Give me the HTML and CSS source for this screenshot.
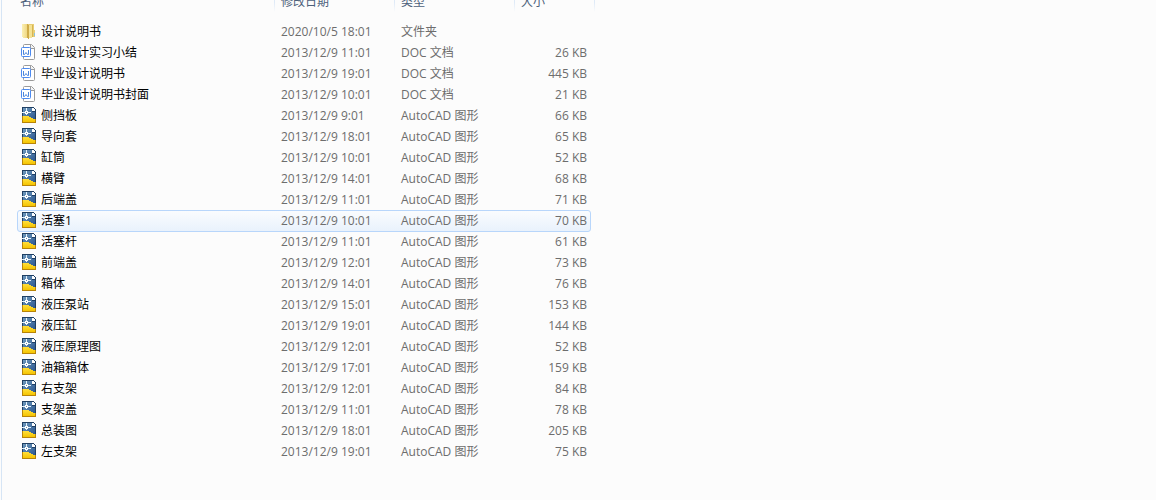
FILE: index.html
```html
<!DOCTYPE html>
<html lang="zh-CN">
<head>
    <meta charset="UTF-8">
    <meta name="viewport" content="width=device-width, initial-scale=1.0">
    <title>毕业设计</title>
    <link rel="stylesheet" href="styles.css">
</head>
<body>
    <!-- File type icons -->
    <svg class="icon-defs" aria-hidden="true">
        <defs>
            <linearGradient id="gold" x1="0" y1="0" x2="1" y2="0">
                <stop offset="0" stop-color="#fbf0b4"/>
                <stop offset="1" stop-color="#ecd27a"/>
            </linearGradient>
            <linearGradient id="sand" x1="0" y1="0" x2="0" y2="1">
                <stop offset="0" stop-color="#ffdf3c"/>
                <stop offset="1" stop-color="#f5c400"/>
            </linearGradient>
            <linearGradient id="sky" x1="0" y1="0" x2="1" y2="1">
                <stop offset="0" stop-color="#6d98bc"/>
                <stop offset="1" stop-color="#2c5790"/>
            </linearGradient>
        </defs>
        <symbol id="folder" viewBox="0 0 16 16" shape-rendering="crispEdges">
            <path d="M7 1h6v6h1v7H7z" fill="#e8cd74"/>
            <path d="M1 1h6v14H2v-1H1z" fill="url(#gold)"/>
            <path d="M6 1h1v1h1v14H7v-1H6z" fill="#cfab48"/>
            <path d="M8 2h3v13H8z" fill="#f4e296"/>
            <path d="M11 2h1v12h-1z" fill="#d6b552"/>
            <path d="M13 10h1v3h-1z" fill="#8fc3d8"/>
        </symbol>
        <symbol id="doc" viewBox="0 0 16 16">
            <path d="M3.500 .5h7l3 3v11a1 1 0 0 1-1 1h-9a1 1 0 0 1-1-1v-13a1 1 0 0 1 1-1z" fill="#fff" stroke="#9a9a9a"/>
            <path d="M9.500 .5v4h4" fill="#f2f2f2" stroke="#9a9a9a"/>
            <rect x=".5" y="3.500" width="9" height="9" rx="1" fill="#fff" stroke="#4c8af0"/>
            <path d="M2.500 6v4.500h1l1.500-2 1.500 2h1V6" fill="none" stroke="#4c86dc"/>
        </symbol>
        <symbol id="dwg" viewBox="0 0 16 16" shape-rendering="crispEdges">
            <path d="M1 0h11l3 3v13H1z" fill="#1f3f63"/>
            <path d="M2 1h9v4h3v7H2z" fill="url(#sky)"/>
            <path d="M11 1h1l2 2v1h-3z" fill="#fff"/>
            <path d="M5 1h1v7H5zM1 5h9v1H1z" fill="#e6f2fa"/>
            <path d="M4 4h3v3H4z" fill="#fff"/>
            <path d="M5 5h1v1H5z" fill="#5b87ad"/>
            <path d="M1 9h7v1h2v1h2v1h3v4H1z" fill="#b88408"/>
            <path d="M2 9h6v1h2v1h2v1h2v3H2z" fill="url(#sand)"/>
        </symbol>
    </svg>

    <main class="pane">
        <table class="files">
            <thead>
                <tr>
                    <th class="name" scope="col">名称</th>
                    <th class="date" scope="col">修改日期</th>
                    <th class="type" scope="col">类型</th>
                    <th class="size" scope="col">大小</th>
                </tr>
            </thead>
            <tbody>
                <tr><td><svg class="icon"><use href="#folder"/></svg>设计说明书</td><td>2020/10/5 18:01</td><td>文件夹</td><td></td></tr>
                <tr><td><svg class="icon"><use href="#doc"/></svg>毕业设计实习小结</td><td>2013/12/9 11:01</td><td>DOC 文档</td><td>26 KB</td></tr>
                <tr><td><svg class="icon"><use href="#doc"/></svg>毕业设计说明书</td><td>2013/12/9 19:01</td><td>DOC 文档</td><td>445 KB</td></tr>
                <tr><td><svg class="icon"><use href="#doc"/></svg>毕业设计说明书封面</td><td>2013/12/9 10:01</td><td>DOC 文档</td><td>21 KB</td></tr>
                <tr><td><svg class="icon"><use href="#dwg"/></svg>侧挡板</td><td>2013/12/9 9:01</td><td>AutoCAD 图形</td><td>66 KB</td></tr>
                <tr><td><svg class="icon"><use href="#dwg"/></svg>导向套</td><td>2013/12/9 18:01</td><td>AutoCAD 图形</td><td>65 KB</td></tr>
                <tr><td><svg class="icon"><use href="#dwg"/></svg>缸筒</td><td>2013/12/9 10:01</td><td>AutoCAD 图形</td><td>52 KB</td></tr>
                <tr><td><svg class="icon"><use href="#dwg"/></svg>横臂</td><td>2013/12/9 14:01</td><td>AutoCAD 图形</td><td>68 KB</td></tr>
                <tr><td><svg class="icon"><use href="#dwg"/></svg>后端盖</td><td>2013/12/9 11:01</td><td>AutoCAD 图形</td><td>71 KB</td></tr>
                <tr class="selected"><td><svg class="icon"><use href="#dwg"/></svg>活塞1</td><td>2013/12/9 10:01</td><td>AutoCAD 图形</td><td>70 KB</td></tr>
                <tr><td><svg class="icon"><use href="#dwg"/></svg>活塞杆</td><td>2013/12/9 11:01</td><td>AutoCAD 图形</td><td>61 KB</td></tr>
                <tr><td><svg class="icon"><use href="#dwg"/></svg>前端盖</td><td>2013/12/9 12:01</td><td>AutoCAD 图形</td><td>73 KB</td></tr>
                <tr><td><svg class="icon"><use href="#dwg"/></svg>箱体</td><td>2013/12/9 14:01</td><td>AutoCAD 图形</td><td>76 KB</td></tr>
                <tr><td><svg class="icon"><use href="#dwg"/></svg>液压泵站</td><td>2013/12/9 15:01</td><td>AutoCAD 图形</td><td>153 KB</td></tr>
                <tr><td><svg class="icon"><use href="#dwg"/></svg>液压缸</td><td>2013/12/9 19:01</td><td>AutoCAD 图形</td><td>144 KB</td></tr>
                <tr><td><svg class="icon"><use href="#dwg"/></svg>液压原理图</td><td>2013/12/9 12:01</td><td>AutoCAD 图形</td><td>52 KB</td></tr>
                <tr><td><svg class="icon"><use href="#dwg"/></svg>油箱箱体</td><td>2013/12/9 17:01</td><td>AutoCAD 图形</td><td>159 KB</td></tr>
                <tr><td><svg class="icon"><use href="#dwg"/></svg>右支架</td><td>2013/12/9 12:01</td><td>AutoCAD 图形</td><td>84 KB</td></tr>
                <tr><td><svg class="icon"><use href="#dwg"/></svg>支架盖</td><td>2013/12/9 11:01</td><td>AutoCAD 图形</td><td>78 KB</td></tr>
                <tr><td><svg class="icon"><use href="#dwg"/></svg>总装图</td><td>2013/12/9 18:01</td><td>AutoCAD 图形</td><td>205 KB</td></tr>
                <tr><td><svg class="icon"><use href="#dwg"/></svg>左支架</td><td>2013/12/9 19:01</td><td>AutoCAD 图形</td><td>75 KB</td></tr>
            </tbody>
        </table>
    </main>
</body>
</html>
```
FILE: styles.css
```css
body {
    margin: 0;
    background: #fcfcfc;
    color: #6d6d6d;
    font-family: "Open Sans", "Noto Sans CJK SC", sans-serif;
    font-size: 12px;
    line-height: 20px;
}
.icon-defs { position: absolute; width: 0; height: 0; }

.pane {
    box-sizing: border-box;
    min-height: 100vh;
    margin-left: 1px;
    padding-left: 15px;
    border-left: 1px solid #d6e5f5;
    overflow: hidden;
}

.files {
    table-layout: fixed;
    width: 578px;
    margin-top: -12px;
    border-collapse: collapse;
}
.name { width: 258px; }
.date, .type { width: 120px; }
.size { width: 80px; }

th {
    height: 33px;
    padding: 0 0 0 6px;
    box-sizing: border-box;
    color: #4c607a;
    font-weight: normal;
    text-align: left;
    vertical-align: top;
    line-height: 28px;
    background: linear-gradient(#dfeaf7 60%, #fcfcfc) right top / 1px 24px no-repeat;
}
th.name { padding-left: 3px; }

tbody tr { position: relative; }
td {
    height: 21px;
    padding: 0 0 0 6px;
    box-sizing: border-box;
    white-space: nowrap;
}
td:first-child { padding-left: 4px; color: #000; }
td:last-child { padding: 0 8px 0 0; text-align: right; }

.icon {
    width: 16px;
    height: 16px;
    margin: 1px 4px 0 0;
    vertical-align: top;
}

.selected td:first-child::before {
    content: "";
    position: absolute;
    z-index: -1;
    top: 0;
    left: 0;
    right: 4px;
    height: 22px;
    box-sizing: border-box;
    border: 1px solid #b8d6fb;
    border-radius: 3px;
    background: linear-gradient(#fafcfe, #e9f2fc);
}
```
